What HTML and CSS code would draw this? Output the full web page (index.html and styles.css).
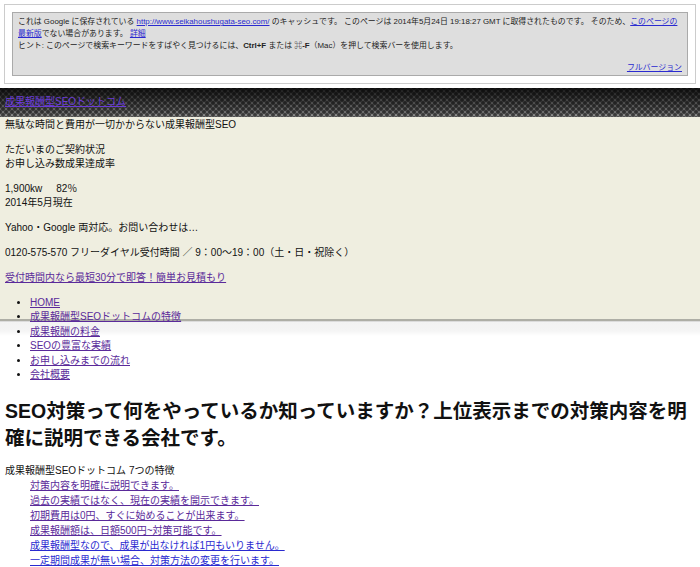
FILE: index.html
```html
<!DOCTYPE html>
<html lang="ja">
<head>
    <meta charset="UTF-8">
    <title>成果報酬型SEOドットコム</title>
    <link rel="stylesheet" href="styles.css">
</head>
<body>
    <div class="cache">
        <div class="cache-inner">
            <div>これは Google に保存されている <a href="#">http://www.seikahoushugata-seo.com/</a> のキャッシュです。 このページは 2014年5月24日 19:18:27 GMT に取得されたものです。 そのため、<a href="#">このページの最新版</a>でない場合があります。 <a href="#">詳細</a></div>
            <div>ヒント: このページで検索キーワードをすばやく見つけるには、<b>Ctrl+F</b> または <b>⌘-F</b>（Mac）を押して検索バーを使用します。</div>
            <div class="full"><a href="#">フルバージョン</a></div>
        </div>
    </div>

    <div class="topbar">
        <a href="#" class="visited">成果報酬型SEOドットコム</a>
    </div>

    <div class="site">
        <div class="header">
            <p>無駄な時間と費用が一切かからない成果報酬型SEO</p>
            <p>ただいまのご契約状況<br>お申し込み数成果達成率</p>
            <p>1,900kw&nbsp;&nbsp;&nbsp;&nbsp;&nbsp;82％<br>2014年5月現在</p>
            <p>Yahoo・Google 両対応。お問い合わせは…</p>
            <p>0120-575-570 フリーダイヤル受付時間 ／ 9：00〜19：00（土・日・祝除く）</p>
            <p><a href="#" class="visited">受付時間内なら最短30分で即答！簡単お見積もり</a></p>
            <ul class="nav">
                <li><a href="#" class="visited">HOME</a></li>
                <li><a href="#" class="visited">成果報酬型SEOドットコムの特徴</a></li>
                <li><a href="#" class="visited">成果報酬の料金</a></li>
                <li><a href="#" class="visited">SEOの豊富な実績</a></li>
                <li><a href="#" class="visited">お申し込みまでの流れ</a></li>
                <li><a href="#" class="visited">会社概要</a></li>
            </ul>
        </div>

        <h1>SEO対策って何をやっているか知っていますか？上位表示までの対策内容を明確に説明できる会社です。</h1>

        <div class="features">
            <p class="features-title">成果報酬型SEOドットコム 7つの特徴</p>
            <ul>
                <li><a href="#" class="visited">対策内容を明確に説明できます。 </a></li>
                <li><a href="#" class="visited">過去の実績ではなく、現在の実績を開示できます。 </a></li>
                <li><a href="#" class="visited">初期費用は0円、すぐに始めることが出来ます。 </a></li>
                <li><a href="#" class="visited">成果報酬額は、日額500円~対策可能です。 </a></li>
                <li><a href="#">成果報酬型なので、成果が出なければ1円もいりません。 </a></li>
                <li><a href="#">一定期間成果が無い場合、対策方法の変更を行います。 </a></li>
            </ul>
        </div>
    </div>
</body>
</html>
```

FILE: styles.css
```css
body {
    margin: 0;
    font-family: 'Liberation Sans', 'Noto Sans CJK JP', sans-serif;
    color: #111;
    background: #fff;
}
a {
    color: #2a2ad0;
}
a.visited {
    color: #5a2a9a;
}

/* google cache header */
.cache {
    margin: 4px 4px 0;
    padding: 7px;
    background: #fff;
    border: 1px solid #ccc;
}
.cache-inner {
    background: #dedede;
    border: 1px solid #aaa;
    padding: 3px 2px 1px 5px;
    font-size: 7.9px;
    line-height: 12px;
    color: #222;
}
.cache-inner a {
    color: #2a2ad0;
}
.cache-inner .full {
    text-align: right;
    margin-top: 10px;
    padding-right: 3px;
}

/* dark stripe */
.topbar {
    margin-top: 4px;
    height: 29px;
    line-height: 27px;
    padding-left: 5px;
    font-size: 10px;
    background:
        radial-gradient(circle, rgba(0,0,0,0.55) 1.4px, transparent 2.4px) 0 0 / 6px 6px,
        radial-gradient(circle, rgba(0,0,0,0.55) 1.4px, transparent 2.4px) 3px 3px / 6px 6px,
        linear-gradient(#1a1a1a, #3c3c3c 35%, #6e6e6e 85%, #9a9a98);
}
.topbar a {
    color: #6a3ad8;
}

.site {
    background: linear-gradient(#efeee0 0, #efeee0 202px, #aeaea6 202px, #aeaea6 204px,
        #dcdcdc 204px, #dcdcdc 205px, #f3f3f3 205px, #f5f5f5 214px, #fff 219px);
    padding: 1px 5px 10px;
}
.header {
    font-size: 10px;
    line-height: 14px;
}
.header p {
    margin: 0 0 11px;
}
.nav {
    margin: 0;
    padding-left: 25px;
    line-height: 14.4px;
}

h1 {
    font-size: 19.5px;
    line-height: 27px;
    margin: 16px 0 11px;
}

.features {
    font-size: 10px;
    line-height: 15px;
}
.features-title {
    margin: 0;
}
.features ul {
    list-style: none;
    margin: 0;
    padding-left: 25px;
}
```
